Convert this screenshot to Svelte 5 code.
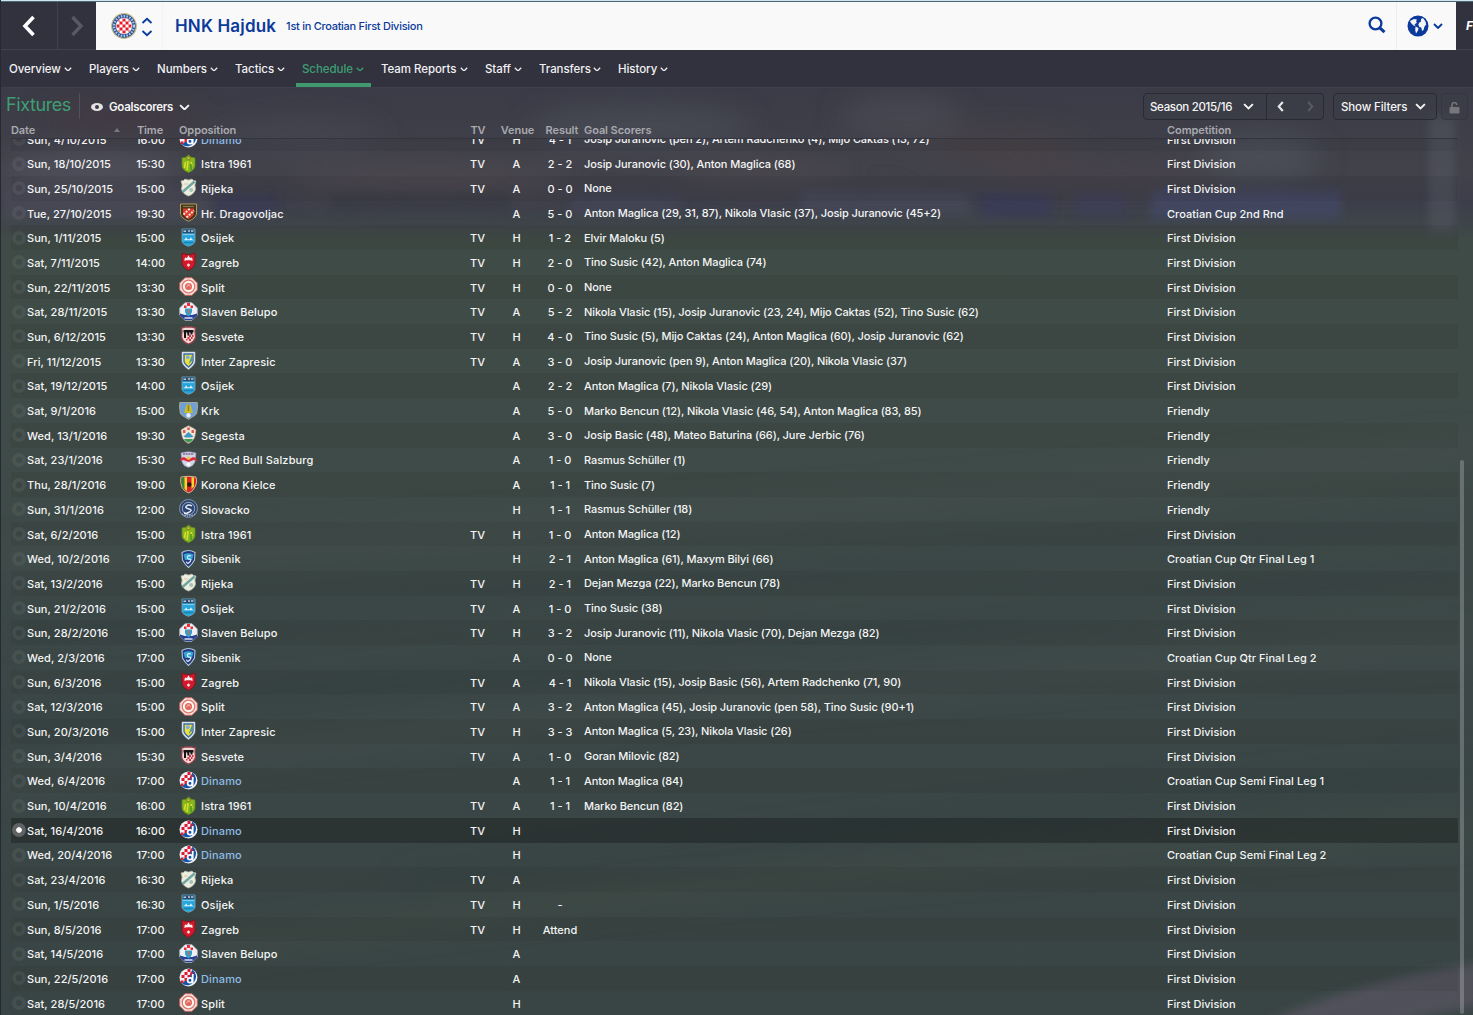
<script>
  const tabs = ['Overview', 'Players', 'Numbers', 'Tactics', 'Schedule', 'Team Reports', 'Staff', 'Transfers', 'History'];

  const L = 'First Division';
  const F = 'Friendly';
  const C = 'Croatian Cup ';
  // date, time, opposition, crest, tv, venue, result, scorers, competition
  const fixtures = [
    ['Sun, 4/10/2015', '16:00', 'Dinamo', 'dinamo', 'TV', 'H', '4 - 1', 'Josip Juranovic (pen 2), Artem Radchenko (4), Mijo Caktas (13, 72)', L],
    ['Sun, 18/10/2015', '15:30', 'Istra 1961', 'istra', 'TV', 'A', '2 - 2', 'Josip Juranovic (30), Anton Maglica (68)', L],
    ['Sun, 25/10/2015', '15:00', 'Rijeka', 'rijeka', 'TV', 'A', '0 - 0', 'None', L],
    ['Tue, 27/10/2015', '19:30', 'Hr. Dragovoljac', 'drago', '', 'A', '5 - 0', 'Anton Maglica (29, 31, 87), Nikola Vlasic (37), Josip Juranovic (45+2)', C + '2nd Rnd'],
    ['Sun, 1/11/2015', '15:00', 'Osijek', 'osijek', 'TV', 'H', '1 - 2', 'Elvir Maloku (5)', L],
    ['Sat, 7/11/2015', '14:00', 'Zagreb', 'zagreb', 'TV', 'H', '2 - 0', 'Tino Susic (42), Anton Maglica (74)', L],
    ['Sun, 22/11/2015', '13:30', 'Split', 'split', 'TV', 'H', '0 - 0', 'None', L],
    ['Sat, 28/11/2015', '13:30', 'Slaven Belupo', 'slaven', 'TV', 'A', '5 - 2', 'Nikola Vlasic (15), Josip Juranovic (23, 24), Mijo Caktas (52), Tino Susic (62)', L],
    ['Sun, 6/12/2015', '13:30', 'Sesvete', 'sesvete', 'TV', 'H', '4 - 0', 'Tino Susic (5), Mijo Caktas (24), Anton Maglica (60), Josip Juranovic (62)', L],
    ['Fri, 11/12/2015', '13:30', 'Inter Zapresic', 'inter', 'TV', 'A', '3 - 0', 'Josip Juranovic (pen 9), Anton Maglica (20), Nikola Vlasic (37)', L],
    ['Sat, 19/12/2015', '14:00', 'Osijek', 'osijek', '', 'A', '2 - 2', 'Anton Maglica (7), Nikola Vlasic (29)', L],
    ['Sat, 9/1/2016', '15:00', 'Krk', 'krk', '', 'A', '5 - 0', 'Marko Bencun (12), Nikola Vlasic (46, 54), Anton Maglica (83, 85)', F],
    ['Wed, 13/1/2016', '19:30', 'Segesta', 'segesta', '', 'A', '3 - 0', 'Josip Basic (48), Mateo Baturina (66), Jure Jerbic (76)', F],
    ['Sat, 23/1/2016', '15:30', 'FC Red Bull Salzburg', 'salzburg', '', 'A', '1 - 0', 'Rasmus Schüller (1)', F],
    ['Thu, 28/1/2016', '19:00', 'Korona Kielce', 'korona', '', 'A', '1 - 1', 'Tino Susic (7)', F],
    ['Sun, 31/1/2016', '12:00', 'Slovacko', 'slovacko', '', 'H', '1 - 1', 'Rasmus Schüller (18)', F],
    ['Sat, 6/2/2016', '15:00', 'Istra 1961', 'istra', 'TV', 'H', '1 - 0', 'Anton Maglica (12)', L],
    ['Wed, 10/2/2016', '17:00', 'Sibenik', 'sibenik', '', 'H', '2 - 1', 'Anton Maglica (61), Maxym Bilyi (66)', C + 'Qtr Final Leg 1'],
    ['Sat, 13/2/2016', '15:00', 'Rijeka', 'rijeka', 'TV', 'H', '2 - 1', 'Dejan Mezga (22), Marko Bencun (78)', L],
    ['Sun, 21/2/2016', '15:00', 'Osijek', 'osijek', 'TV', 'A', '1 - 0', 'Tino Susic (38)', L],
    ['Sun, 28/2/2016', '15:00', 'Slaven Belupo', 'slaven', 'TV', 'H', '3 - 2', 'Josip Juranovic (11), Nikola Vlasic (70), Dejan Mezga (82)', L],
    ['Wed, 2/3/2016', '17:00', 'Sibenik', 'sibenik', '', 'A', '0 - 0', 'None', C + 'Qtr Final Leg 2'],
    ['Sun, 6/3/2016', '15:00', 'Zagreb', 'zagreb', 'TV', 'A', '4 - 1', 'Nikola Vlasic (15), Josip Basic (56), Artem Radchenko (71, 90)', L],
    ['Sat, 12/3/2016', '15:00', 'Split', 'split', 'TV', 'A', '3 - 2', 'Anton Maglica (45), Josip Juranovic (pen 58), Tino Susic (90+1)', L],
    ['Sun, 20/3/2016', '15:00', 'Inter Zapresic', 'inter', 'TV', 'H', '3 - 3', 'Anton Maglica (5, 23), Nikola Vlasic (26)', L],
    ['Sun, 3/4/2016', '15:30', 'Sesvete', 'sesvete', 'TV', 'A', '1 - 0', 'Goran Milovic (82)', L],
    ['Wed, 6/4/2016', '17:00', 'Dinamo', 'dinamo', '', 'A', '1 - 1', 'Anton Maglica (84)', C + 'Semi Final Leg 1'],
    ['Sun, 10/4/2016', '16:00', 'Istra 1961', 'istra', 'TV', 'A', '1 - 1', 'Marko Bencun (82)', L],
    ['Sat, 16/4/2016', '16:00', 'Dinamo', 'dinamo', 'TV', 'H', '', '', L],
    ['Wed, 20/4/2016', '17:00', 'Dinamo', 'dinamo', '', 'H', '', '', C + 'Semi Final Leg 2'],
    ['Sat, 23/4/2016', '16:30', 'Rijeka', 'rijeka', 'TV', 'A', '', '', L],
    ['Sun, 1/5/2016', '16:30', 'Osijek', 'osijek', 'TV', 'H', '-', '', L],
    ['Sun, 8/5/2016', '17:00', 'Zagreb', 'zagreb', 'TV', 'H', 'Attend', '', L],
    ['Sat, 14/5/2016', '17:00', 'Slaven Belupo', 'slaven', '', 'A', '', '', L],
    ['Sun, 22/5/2016', '17:00', 'Dinamo', 'dinamo', '', 'A', '', '', L],
    ['Sat, 28/5/2016', '17:00', 'Split', 'split', '', 'H', '', '', L]
  ];
  const selected = 28;
</script>

{#snippet chevron(w, sw)}
  <svg width={w} height={w * 0.6} viewBox="0 0 10 6" fill="none" stroke="currentColor" stroke-width={sw}><path d="M1 1l4 4 4-4" /></svg>
{/snippet}

{#snippet crest(k)}
  <svg class="crest" viewBox="0 0 19 19">
    {#if k === 'dinamo'}
      <circle cx="9.5" cy="9.5" r="9" fill="#eef0f6" /><path d="M13.500 1.500A8.700 8.700 0 1 1 3 15.500L9 10z" fill="#1454a8" />
      <path d="M8.500 1h3v3h-3zM5.500 4h3v3h-3zM2.500 7h3v3h-3zM11.500 4h2.500v3h-2.500zM8.500 7h3v2.500h-3zM5.500 10h3v3h-3zM2 12.500h2.500V15H2z" fill="#e0192d" />
      <circle cx="11" cy="12.300" r="2.400" fill="#1454a8" stroke="#fff" stroke-width="1.700" /><path d="M13.800 6l-.3 9.500" stroke="#fff" stroke-width="1.800" />
    {:else if k === 'istra'}
      <path d="M3 4l4-.8L9.500 1 12 3.200l4 .8v7c0 4-3 6-6.500 7.500C6 17 3 15 3 11z" fill="#84b81d" stroke="#5e8a22" stroke-width=".8" />
      <path d="M6.500 8l-1 6M9 7l-1 9M12 8l1 4" stroke="#d9dd2d" stroke-width="1.600" /><circle cx="9.500" cy="4.300" r="2.300" fill="#8b8f22" /><circle cx="9.500" cy="4.300" r="1" fill="#d2cf3a" /><path d="M12 10v6" stroke="#4d9a22" stroke-width="1.600" />
    {:else if k === 'rijeka'}
      <path d="M2 3q3 0 4-2 3.500 2 7 0 1 2 4 2-2 4-.5 8-1 5-7 7-6-2-7-7Q4 7 2 3z" fill="#eeeede" stroke="#b5b7a8" stroke-width=".8" />
      <path d="M3.500 14L15.500 3.500" stroke="#6fa5a3" stroke-width="2.400" /><circle cx="12.200" cy="12" r="2" fill="#a3c1bd" /><path d="M5 6h4" stroke="#d9c7a5" stroke-width="1" />
    {:else if k === 'drago'}
      <path d="M1.500 1h16v9c0 4-4 6.500-8 8.200-4-1.700-8-4.200-8-8.200z" fill="#43351c" stroke="#b29b66" stroke-width="1" />
      <path d="M4 5.500h11V10c0 3-3 4.500-5.500 6C7 14.500 4 13 4 10z" fill="#dd3a2c" /><path d="M4.500 11.500L11 5.500M7.500 14.500L15 7.500" stroke="#f9eedd" stroke-width="1.900" stroke-dasharray="2 1.200" />
      <path d="M4 3.500h11" stroke="#8b7a44" stroke-width="1.200" />
    {:else if k === 'osijek'}
      <path d="M3 1h13v12c0 2.500-3 4-6.500 5.300C6 17 3 15.500 3 13z" fill="#27a5db" stroke="#7ba9bd" stroke-width=".8" />
      <path d="M3.500 1.300h12v4h-12z" fill="#2c4c70" /><path d="M4.500 3.200h2.500M9 3h2M12 3h2.500" stroke="#b9cad8" stroke-width="1.400" />
      <path d="M4 6.500h11" stroke="#7fcdea" stroke-width="1.200" /><path d="M4 12.300l2-1 1-2 1.300 2h2.400l1.300-2 1 2 2 1z" fill="#e1f2f8" /><path d="M4.500 14.500h10" stroke="#1685b8" stroke-width="1.500" />
    {:else if k === 'zagreb'}
      <path d="M3 1l4 1.500h5L16 1v10c0 3-3 5.500-6.500 7.500C6 16.500 3 14 3 11z" fill="#d3182b" stroke="#7b1722" stroke-width="1" />
      <path d="M5.500 9V6.500l1.500-1.200.8.900 1.700-3 1.700 3 .8-.9 1.500 1.200V9l-2-.8h-4z" fill="#f9eeee" /><path d="M9.500 11.300l1.800 1.800-1.800 2-1.800-2z" fill="#f9e2e4" />
    {:else if k === 'split'}
      <path d="M6 .7h7L18.300 6v7L13 18.300H6L.7 13V6z" fill="#f3ded9" stroke="#cf6259" stroke-width=".9" />
      <circle cx="9.500" cy="9.500" r="6.300" fill="#fdf3f1" stroke="#df776c" stroke-width="1.300" /><circle cx="9.500" cy="9.500" r="3.500" fill="#e0655b" /><path d="M7.200 10.300q2.300-3.500 4.600-.5M8 8h3" stroke="#f6c0b7" stroke-width=".9" fill="none" />
    {:else if k === 'slaven'}
      <path d="M6 .7h7L18.300 6v7L13 18.300H6L.7 13V6z" fill="#eef0f5" stroke="#b3bccd" stroke-width=".7" />
      <path d="M1 11.500l5 1.500h7l5-1.500v2L13 18H6l-5-4.500z" fill="#283f93" /><path d="M5 3.500h2.500V6H5zM11.500 3.500H14V6h-2.500zM8 1h3v3H8z" fill="#ea2b38" /><path d="M6 6.500h7V10q-1 3.500-3.500 4.500Q7 13.500 6 10z" fill="#2ba5d0" />
      <path d="M8 9h3M9.500 7v5" stroke="#c96a62" stroke-width="1.200" /><path d="M5.500 16h8" stroke="#e9edf6" stroke-width="1.400" />
    {:else if k === 'sesvete'}
      <path d="M2.500 2q2 0 3.500-1h7q1.500 1 3.500 1l-.5 3 .5 6q-1 5-7 7-6-2-7-7l.5-6z" fill="#efd9d9" stroke="#98404a" stroke-width="1.300" />
      <path d="M4.500 4h10v2.500h-10z" fill="#1b1517" /><path d="M6 5v7M9 5l.5 4.500M12.500 5v3.500" stroke="#171216" stroke-width="2" /><path d="M10 9h2v2h-2zM13 9h1.500v2H13zM8.500 11h2v2h-2zM12 11h1.500v2H12zM10 13h2v2h-2zM7 13h1.500v1.500H7z" fill="#d4323f" />
    {:else if k === 'inter'}
      <path d="M3 1h13v9c0 3-3 6-6.500 8.500C6 16 3 13 3 10z" fill="#e9f0f2" stroke="#b1bfca" stroke-width=".6" />
      <path d="M5 3h9v7c0 2-2 4-4.500 6C7 14 5 12 5 10z" fill="#f0e23c" stroke="#3c6aa8" stroke-width="1.400" /><path d="M9.500 13l3.500-9v6z" fill="#4b97a5" /><circle cx="8.800" cy="6.300" r="2" fill="#7fb0d9" />
    {:else if k === 'krk'}
      <path d="M1 1.500h17l.5 4-1 7c-2 3-5 4-8 5.500-3-1.500-6-2.500-8-5.500l-1-7z" fill="#6f9fdb" stroke="#a5a795" stroke-width="1.200" />
      <path d="M7.500 3.500h4l2.500 8.500H5z" fill="#c9bb2e" /><path d="M9.500 4v6" stroke="#8e861f" stroke-width="1.600" /><circle cx="9.500" cy="14.300" r="2.200" fill="#e6eef9" />
    {:else if k === 'segesta'}
      <path d="M2 5l3-2L9.500.7 14 3l3 2-1 6q-1 5-6.500 7.500Q4 16 3 11z" fill="#f1e8dd" stroke="#bd9384" stroke-width=".6" />
      <path d="M4 5h2.500v3H4zM8.200 2.500h2.600V5H8.200zM12.500 5H15v3h-2.500z" fill="#db5b4a" /><path d="M4.500 11.500l5-4.500 5 4.500-2 1h-6z" fill="#3f9ac2" /><path d="M5 14h9q-1 2.500-4.500 3.700Q6 16.500 5 14z" fill="#3a9c52" />
    {:else if k === 'salzburg'}
      <path d="M2 3q7-2.500 15 0l-1 9q-2 4.500-6.500 5.500Q4.500 16.500 3 12z" fill="#cfd4e6" stroke="#8c94b8" stroke-width=".6" />
      <path d="M4 4h11" stroke="#8a5f8d" stroke-width="1.500" stroke-dasharray="2 .7" /><path d="M.5 11q1-3.500 4.500-4l2.500 1.500L9.500 7l2 1.500L14 7q3.500.5 4.500 4l-4-1-5 2-5-2z" fill="#dc2b3c" /><circle cx="9.500" cy="8.300" r="1.700" fill="#f0c33b" /><circle cx="9.500" cy="14.300" r="2" fill="#f7f8fb" />
    {:else if k === 'korona'}
      <path d="M2 2q7-1.500 15 0 1.500 5-.5 9-2 5-6.500 7Q4 16 2.500 11 1 6 2 2z" fill="#d8232a" stroke="#e6ddaa" stroke-width=".8" />
      <path d="M2.500 2.500h3v13Q1.500 10 2.500 2.500z" fill="#2d8a36" /><path d="M5.500 2.200h2.500V16l-2.500-2z" fill="#f0d92c" /><path d="M12.500 2.200H15v9l-2.500 3z" fill="#f0d92c" /><circle cx="10.300" cy="9.500" r="2.200" fill="#25191a" />
    {:else if k === 'slovacko'}
      <circle cx="9.500" cy="9.500" r="9" fill="#2b4570" stroke="#93a5c3" stroke-width=".8" /><circle cx="9.500" cy="9.500" r="6.200" fill="none" stroke="#a9b7cd" stroke-width=".9" />
      <path d="M13 6.800Q9.500 5 7.500 7t2.500 3-.5 3.500-3.500-.5" fill="none" stroke="#e6ebf3" stroke-width="1.400" /><path d="M3 15q6 4 13 0" fill="none" stroke="#dce3ee" stroke-dasharray="1.500 1" />
    {:else if k === 'sibenik'}
      <path d="M3 3.500q6.500-4 13 0l-.5 7.500q-2 4-6 7.500Q5.500 15 3.500 11z" fill="#25377f" stroke="#adc6d8" stroke-width="1.100" />
      <path d="M4.500 5.500q5-2.500 10 0L13 11H6z" fill="#32a5d8" /><path d="M12 7q-3-1-3.500.8t2 2.400 0 3-3-.5" fill="none" stroke="#e4f1f8" stroke-width="1.200" />
    {/if}
  </svg>
{/snippet}

<div class="app">
  <svg class="backdrop" viewBox="0 0 1473 928" preserveAspectRatio="none">
    <defs>
      <linearGradient id="pitch" x1="0" y1="0" x2="0" y2="1">
        <stop offset="0" stop-color="#3a3b46" /><stop offset=".09" stop-color="#42424b" /><stop offset=".125" stop-color="#3d3e4a" />
        <stop offset=".145" stop-color="#3e444a" /><stop offset=".165" stop-color="#3f4b46" /><stop offset=".4" stop-color="#3f4b48" />
        <stop offset=".65" stop-color="#3b4746" /><stop offset="1" stop-color="#394544" />
      </linearGradient>
      <filter id="soft" x="-20%" y="-80%" width="140%" height="260%"><feGaussianBlur stdDeviation="14" /></filter>
      <filter id="near" x="-20%" y="-80%" width="140%" height="260%"><feGaussianBlur stdDeviation="5" /></filter>
    </defs>
    <rect width="1473" height="928" fill="url(#pitch)" />
    <g filter="url(#soft)" opacity=".7">
      <ellipse cx="90" cy="85" rx="90" ry="20" fill="#555562" /><ellipse cx="120" cy="30" rx="80" ry="15" fill="#45393f" />
      <ellipse cx="640" cy="40" rx="110" ry="22" fill="#4b4d58" /><ellipse cx="430" cy="95" rx="140" ry="16" fill="#514c4f" />
      <ellipse cx="900" cy="30" rx="60" ry="24" fill="#4b4c55" /><ellipse cx="1260" cy="70" rx="60" ry="22" fill="#50535d" />
      <ellipse cx="1100" cy="90" rx="120" ry="14" fill="#494248" /><ellipse cx="1000" cy="60" rx="80" ry="18" fill="#494345" />
      <ellipse cx="760" cy="85" rx="90" ry="14" fill="#4d494d" /><ellipse cx="300" cy="50" rx="80" ry="18" fill="#464752" />
    </g>
    <g filter="url(#near)" opacity=".45">
      <rect x="0" y="100" width="210" height="34" fill="#51515d" /><rect x="215" y="108" width="60" height="20" fill="#38395e" />
      <rect x="800" y="104" width="170" height="24" fill="#4d5062" /><rect x="980" y="106" width="70" height="24" fill="#393963" /><rect x="1075" y="106" width="50" height="24" fill="#3c3c62" /><rect x="1150" y="104" width="190" height="28" fill="#465079" />
      <rect x="570" y="108" width="110" height="20" fill="#4a4c5e" /><rect x="330" y="106" width="180" height="18" fill="#33343f" />
      <rect x="1428" y="30" width="26" height="115" fill="#585c66" />
    </g>
    <g filter="url(#soft)" opacity=".35" fill="none" stroke-width="22">
      <path d="M0 470Q700 440 1473 360M0 700Q700 600 1473 560" stroke="#4b5453" /><path d="M0 540Q700 500 1473 430M0 640Q700 560 1473 480M400 800Q900 740 1473 680" stroke="#303f43" />
      <path d="M200 860Q800 780 1473 740" stroke="#485349" />
    </g>
    <path filter="url(#near)" d="M1265 935Q1350 895 1480 876v42Q1440 925 1400 935z" fill="#54535f" opacity=".85" />
  </svg>

  <header class="top">
    <button class="back" aria-label="Back"><svg width="14" height="22" viewBox="0 0 14 22"><path d="M11.500 2L3 11l8.500 9" fill="none" stroke="#fff" stroke-width="3.600" /></svg></button>
    <button class="fwd" aria-label="Forward"><svg width="14" height="22" viewBox="0 0 14 22"><path d="M2.500 2L11 11l-8.500 9" fill="none" stroke="#585963" stroke-width="3.400" /></svg></button>
    <div class="club">
      <svg width="26" height="26" viewBox="0 0 26 26">
        <circle cx="13" cy="13" r="12.300" fill="#22509a" stroke="#c9bd84" stroke-width="1.200" />
        <circle cx="13" cy="13" r="10" fill="none" stroke="#b9c7e0" stroke-width="2.200" stroke-dasharray="1.600 1.300" />
        <defs><pattern id="chk" width="6" height="6" patternUnits="userSpaceOnUse" x="2.500" y="2.500"><rect width="6" height="6" fill="#fff" /><path d="M0 0h3v3H0zM3 3h3v3H3z" fill="#e4202e" /></pattern></defs>
        <circle cx="13" cy="13" r="8" fill="url(#chk)" stroke="#f4f4f4" stroke-width=".6" />
      </svg>
      <svg class="updown" width="12" height="20" viewBox="0 0 12 20"><path d="M1.500 6L6 1.800 10.500 6M1.500 14L6 18.200 10.500 14" fill="none" stroke="#0b3a9b" stroke-width="1.900" /></svg>
    </div>
    <div class="title"><h1>HNK Hajduk</h1><span>1st in Croatian First Division</span></div>
    <svg class="search" width="18" height="18" viewBox="0 0 18 18"><circle cx="7.500" cy="7.500" r="5.900" fill="none" stroke="#0b3a9b" stroke-width="2.300" /><path d="M11.800 11.800l4.700 4.300" stroke="#0b3a9b" stroke-width="3" /></svg>
    <div class="world">
      <svg width="22" height="22" viewBox="0 0 22 22"><circle cx="11" cy="11" r="10.500" fill="#0b3a9b" />
        <path d="M3 6l4-2 3 .5-1 2 1 1-2.500 2L8.500 11l-2-.5L4 8zM8.500 11.500l3 1.500-.5 2.500-2 3-.8-3.500zM14 4l2-1 2.500 3.500.7 3-1.700 2-1 3.500-1.500 1-.7-3.500-2-.5-1-2.500 1-2 1.500-.5z" fill="#f4f4f4" /></svg>
      {@render chevron(10, 1.9)}
    </div>
    <div class="brand">F</div>
  </header>

  <nav>
    {#each tabs as t, i}
      <div class="tab" class:active={i === 4}><span>{t}</span>{@render chevron(8, 1.6)}</div>
    {/each}
  </nav>

  <main>
    <div class="tools">
      <h2>Fixtures</h2>
      <div class="view">
        <svg width="12" height="8" viewBox="0 0 12 8"><ellipse cx="6" cy="4" rx="6" ry="4" fill="#e3e3e6" /><circle cx="6" cy="4" r="2" fill="#3a3b46" /></svg>
        <b>Goalscorers</b>{@render chevron(11, 1.7)}
      </div>
      <div class="season">
        <div class="pick">Season 2015/16 {@render chevron(11, 1.7)}</div>
        <svg class="prev" width="7" height="11" viewBox="0 0 7 11"><path d="M5.800 1L1.800 5.500l4 4.500" fill="none" stroke="#e6e6e8" stroke-width="2.200" /></svg>
        <svg class="next" width="7" height="11" viewBox="0 0 7 11"><path d="M1.200 1l4 4.500-4 4.500" fill="none" stroke="#5a5b65" stroke-width="2" /></svg>
      </div>
      <div class="filters">Show Filters {@render chevron(11, 1.7)}</div>
      <div class="lock"><svg width="11" height="12" viewBox="0 0 11 12"><rect x=".5" y="5" width="10" height="6.500" rx="1" fill="#76777c" /><path d="M3 5V3a2.400 2.400 0 0 1 4.800 0" fill="none" stroke="#76777c" stroke-width="1.500" /></svg></div>
    </div>

    <div class="head">
      <span>Date</span><i class="sort"></i><span class="mid">Time</span><span>Opposition</span><span class="mid">TV</span><span class="mid">Venue</span><span class="mid">Result</span><span>Goal Scorers</span><span>Competition</span>
    </div>

    <div class="list">
      <div class="rows">
        {#each fixtures as [date, time, opp, badge, tv, venue, result, goals, comp], i}
          <div class="row" class:dark={i % 2 === 0 && i !== selected} class:sel={i === selected}>
            <i class="radio"></i>
            <span class="d">{date}</span>
            <span class="mid t">{time}</span>
            {@render crest(badge)}
            <span class="o" class:link={opp === 'Dinamo'}>{opp}</span>
            <span class="mid">{tv}</span>
            <span class="mid">{venue}</span>
            <span class="mid">{result}</span>
            <span class="g">{goals}</span>
            <span class="c">{comp}</span>
          </div>
        {/each}
      </div>
      <div class="scroll"></div>
    </div>
  </main>
</div>

<style>
  :global(body) { background: #31323e; overflow: hidden; }
  .app { position: relative; width: 1473px; height: 1015px; overflow: hidden; box-sizing: border-box; display: flex; flex-direction: column; border-left: 1px solid #282834; background: #31323e; color: #f4f5f5; font: 500 11px/14px Inter, "Liberation Sans", sans-serif; white-space: nowrap; }
  svg { display: block; flex: none; }
  .backdrop { position: absolute; left: 0; top: 87px; width: 1473px; height: 928px; }
  .top, nav, main { position: relative; }
  .top { display: flex; align-items: stretch; height: 50px; box-sizing: border-box; border-top: 1px solid #cfe6f0; box-shadow: inset 0 1px #4b6875; padding-top: 1px; background: #31323e; }
  button { border: 0; background: none; display: flex; align-items: center; justify-content: center; padding: 0; border-bottom: 1px solid #41424e; }
  .back { width: 56px; }
  .fwd { width: 39px; box-sizing: border-box; border-left: 1px solid #41424e; }
  .club { width: 67px; display: flex; align-items: center; gap: 4px; padding-left: 15px; box-sizing: border-box; background: #f9f9f9; border-right: 1px solid #f3f3f4; }
  .updown { margin-top: 1px; }
  .title { flex: 1; display: flex; align-items: center; gap: 10px; padding-left: 12px; background: #f9f9f9; color: #0b3a9b; }
  .title span { letter-spacing: -.28px; }
  h1 { margin: 0; font: 600 17px/20px Inter, sans-serif; letter-spacing: .17px; }
  .search { background: #f9f9f9; padding: 14px 10px 16px 0; }
  .world { width: 60px; box-sizing: border-box; display: flex; align-items: center; gap: 4px; padding-left: 10px; background: #f9f9f9; border-left: 1px solid #eeeeef; color: #0b3a9b; }
  .brand { width: 17px; overflow: hidden; box-sizing: border-box; padding: 16px 0 0 10px; font: italic 700 12px/16px Inter, sans-serif; color: #fff; border-bottom: 1px solid #41424e; }

  nav { height: 38px; box-sizing: border-box; padding-left: 2px; display: grid; grid-template-columns: 80px 68px 78px 67px 79px 104px 54px 79px 67px; border-bottom: 1px solid #3e3f4b; background: #31323e; }
  .tab { position: relative; display: flex; align-items: center; justify-content: space-between; padding: 1px 11px 0 6px; font-size: 11.500px; letter-spacing: -.06px; color: #f1f1f3; }
  .tab.active { color: #3f9f74; }
  .tab.active::after { content: ""; position: absolute; left: 0; right: 4px; bottom: 0; height: 4px; background: #40996f; }

  main { flex: 1; min-height: 0; display: flex; flex-direction: column; }
  .tools { display: flex; height: 34px; align-items: center; padding: 2px 5px 0; box-sizing: border-box; font-size: 11.500px; }
  h2 { margin: 0; width: 73px; height: 26px; font: 400 18px/23px Inter, sans-serif; letter-spacing: -.4px; color: #3f9f74; border-right: 1px solid #50515b; }
  .view { flex: 1; display: flex; align-items: center; gap: 6px; padding-left: 11px; padding-top: 2px; }
  .view b { font-weight: 600; letter-spacing: -.3px; }
  .season, .filters, .lock { height: 27px; box-sizing: border-box; display: flex; align-items: center; border: 1px solid #292a34; border-radius: 4px; background: #3a3b4680; padding-top: 1px; }
  .pick { width: 123px; height: 25px; display: flex; align-items: center; justify-content: space-between; padding: 0 12px 0 6px; box-sizing: border-box; border-right: 1px solid #292a34; letter-spacing: -.32px; margin-top: -1px; padding-top: 1px; }
  .season { width: 181px; margin-right: 9px; }
  .prev { margin-left: 10px; }
  .next { margin-left: 23px; }
  .filters { width: 104px; justify-content: space-between; padding: 1px 10px 0 7px; margin-right: 4px; letter-spacing: -.12px; }
  .lock { width: 27px; justify-content: center; border-color: #353641; padding-top: 3px; }

  .head { height: 17px; box-sizing: border-box; margin-left: 10px; width: 1447px; border-bottom: 1px solid #33343e; display: grid; grid-template-columns: 103px 7px 58px 282px 34px 45px 44px 583px 1fr; align-items: center; color: #a9a9ae; font-weight: 600; letter-spacing: -.08px; }
  .sort { width: 0; border: 3.500px solid transparent; border-top: 0; border-bottom: 4px solid #777a85; box-sizing: border-box; }
  .mid { text-align: center; }
  .list { flex: 1; min-height: 0; overflow: hidden; display: flex; padding-left: 10px; }
  .rows { width: 1447px; margin-top: -12.400px; flex: none; }
  .row { height: 24.700px; display: grid; grid-template-columns: 16px 103px 41px 8px 19px 263px 33px 45px 42px 3px 583px 1fr; align-items: center; }
  .row > span { padding-top: 1.200px; }
  .row .d { grid-column: 2; letter-spacing: .06px; }
  .row .crest { grid-column: 5; }
  .crest { width: 19px; height: 19px; margin-top: -1px; }
  .row .o { padding-left: 3px; letter-spacing: .15px; }
  .row .g { grid-column: 11; padding-top: 0; letter-spacing: -.09px; }
  .row .c { grid-column: 12; letter-spacing: .05px; }
  .dark { background: #0000000c; }
  .sel { background: #00000042; }
  .row .link { color: #8fbce6; }
  .radio { width: 14px; height: 14px; margin-left: 1px; box-sizing: border-box; border-radius: 50%; border: 4px solid #ffffff0f; }
  .sel .radio { border-color: #5f6363; background: #fff; background-clip: padding-box; }
  .scroll { width: 4px; height: 554px; margin: 321px 0 0 2px; border-radius: 2px; background: #ffffff38; }
</style>
